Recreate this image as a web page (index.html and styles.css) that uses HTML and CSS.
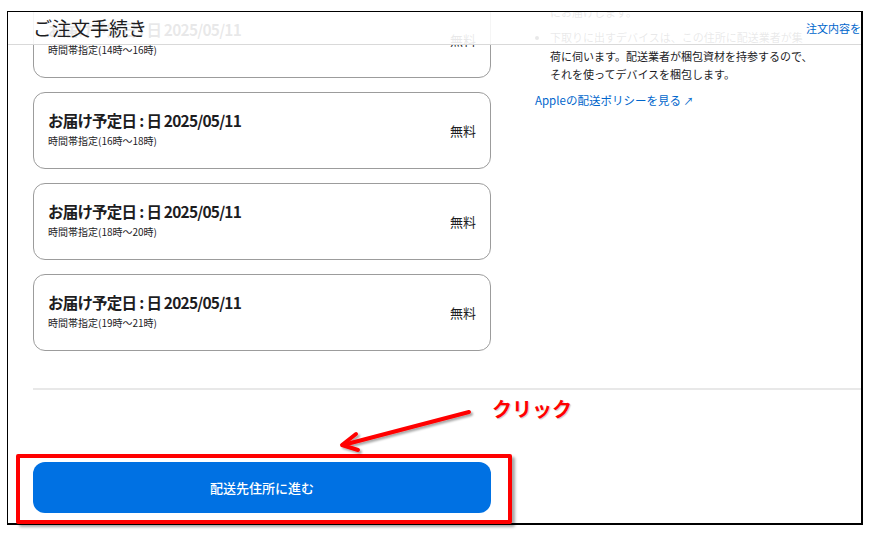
FILE: index.html
```html
<!DOCTYPE html>
<html lang="ja">
<head>
<meta charset="utf-8">
<title>ご注文手続き</title>
<link rel="stylesheet" href="styles.css">
</head>
<body>
<div class="shot">
  <div class="frame">
    <main class="page">
      <div class="cols">
        <section class="slots">
          <div class="slot">
            <div class="slot-info">
              <div class="slot-title">お届け予定日<span class="colon">:</span>日 2025/05/11</div>
              <div class="slot-sub">時間帯指定(14時〜16時)</div>
            </div>
            <div class="slot-price">無料</div>
          </div>
          <div class="slot">
            <div class="slot-info">
              <div class="slot-title">お届け予定日<span class="colon">:</span>日 2025/05/11</div>
              <div class="slot-sub">時間帯指定(16時〜18時)</div>
            </div>
            <div class="slot-price">無料</div>
          </div>
          <div class="slot">
            <div class="slot-info">
              <div class="slot-title">お届け予定日<span class="colon">:</span>日 2025/05/11</div>
              <div class="slot-sub">時間帯指定(18時〜20時)</div>
            </div>
            <div class="slot-price">無料</div>
          </div>
          <div class="slot">
            <div class="slot-info">
              <div class="slot-title">お届け予定日<span class="colon">:</span>日 2025/05/11</div>
              <div class="slot-sub">時間帯指定(19時〜21時)</div>
            </div>
            <div class="slot-price">無料</div>
          </div>
        </section>
        <aside class="notes">
          <ul class="note-list">
            <li class="cont">にお届けします。</li>
            <li>下取りに出すデバイスは、この住所に配送業者が集<br>荷に伺います。配送業者が梱包資材を持参するので、<br>それを使ってデバイスを梱包します。</li>
          </ul>
          <a class="policy" href="#">Appleの配送ポリシーを見る <span class="ext">↗</span></a>
        </aside>
      </div>
      <div class="footer">
        <button class="primary">配送先住所に進む</button>
      </div>
    </main>
    <header class="topbar">
      <h1 class="topbar-title">ご注文手続き</h1>
      <a class="topbar-link" href="#">注文内容を確認</a>
    </header>
  </div>
</div>

<div class="callout-box"></div>
<svg class="callout-arrow" width="874" height="538" viewBox="0 0 874 538">
  <defs>
    <filter id="sh" x="-10%" y="-10%" width="130%" height="140%">
      <feDropShadow dx="2" dy="2" stdDeviation="1.2" flood-color="#000" flood-opacity="0.35"/>
    </filter>
  </defs>
  <g filter="url(#sh)" stroke="#ff0000" stroke-width="4" fill="none" stroke-linecap="round" stroke-linejoin="round">
    <line x1="469" y1="412" x2="343" y2="445"/>
    <polyline points="356,434 342,445 358,450"/>
  </g>
</svg>
<div class="callout-text">クリック</div>
</body>
</html>
```
FILE: styles.css
```css
* { box-sizing: border-box; }
html, body { margin: 0; padding: 0; background: #fff; }
body {
  width: 874px;
  height: 538px;
  overflow: hidden;
  font-family: "Noto Sans CJK JP", "Noto Sans", sans-serif;
  color: #1d1d1f;
}
.shot { padding: 11px 0 0 7px; }
.frame {
  position: relative;
  width: 856px;
  height: 514px;
  border-left: 1px solid #000;
  border-top: 1px solid #000;
  border-right: 2px solid #000;
  border-bottom: 2px solid #000;
  overflow: hidden;
  background: #fff;
}
.page { margin-top: -11px; }
.cols {
  display: flex;
  gap: 44px;
  padding-left: 25px;
}
.slots {
  width: 458px;
  flex: none;
  display: flex;
  flex-direction: column;
  gap: 14px;
}
.slot {
  height: 77px;
  border: 1px solid #9c9c9c;
  border-radius: 12px;
  display: flex;
  align-items: center;
  justify-content: space-between;
  padding: 0 14px 0 14px;
}
.slot-title {
  font-size: 15.5px;
  line-height: 20px;
  font-weight: 700;
  letter-spacing: -0.8px;
  margin-top: -3px;
}
.colon { margin: 0 3px 0 3px; }
.slot-sub {
  font-size: 10px;
  line-height: 14px;
  margin-top: 4px;
}
.slot-price {
  font-size: 13px;
  line-height: 18px;
  margin-top: 0;
}
.notes {
  padding-top: 2px;
  font-size: 11px;
  line-height: 18.5px;
  white-space: nowrap;
}
.note-list {
  margin: 0;
  padding-left: 15px;
}
.note-list li { margin-bottom: 6.5px; }
.note-list li.cont { list-style: none; }
.policy {
  display: inline-block;
  margin-top: 1px;
  color: #0066cc;
  text-decoration: none;
  font-size: 11.5px;
  line-height: 18px;
}
.ext { font-size: 10px; }
.footer {
  margin: 37px 0 0 25px;
  border-top: 2px solid #e8e8e8;
  padding-top: 72px;
}
.primary {
  display: block;
  width: 458px;
  height: 51px;
  border: 0;
  border-radius: 12px;
  background: #0071e3;
  color: #fff;
  font-family: inherit;
  font-size: 13px;
  font-weight: 500;
}
.topbar {
  position: absolute;
  top: 0;
  left: 0;
  right: 0;
  height: 33px;
  background: rgba(255, 255, 255, 0.9);
  border-bottom: 1px solid #d9d9d9;
  display: flex;
  align-items: center;
  justify-content: space-between;
  padding-left: 25px;
}
.topbar-title {
  margin: 0;
  font-size: 19px;
  font-weight: 400;
  line-height: 24px;
}
.topbar-link {
  position: relative;
  left: 22px;
  color: #0066cc;
  text-decoration: none;
  font-size: 11px;
  white-space: nowrap;
}
.callout-box {
  position: absolute;
  left: 16px;
  top: 454px;
  width: 496px;
  height: 70px;
  border: 4px solid #ff0000;
  border-radius: 2px;
  box-shadow: 3px 3px 3px rgba(0, 0, 0, 0.35);
}
.callout-arrow {
  position: absolute;
  left: 0;
  top: 0;
}
.callout-text {
  position: absolute;
  left: 492px;
  top: 396px;
  color: #ff0000;
  font-size: 20px;
  font-weight: 700;
  line-height: 26px;
  text-shadow: 1px 1px 1px rgba(0, 0, 0, 0.2);
}
```
